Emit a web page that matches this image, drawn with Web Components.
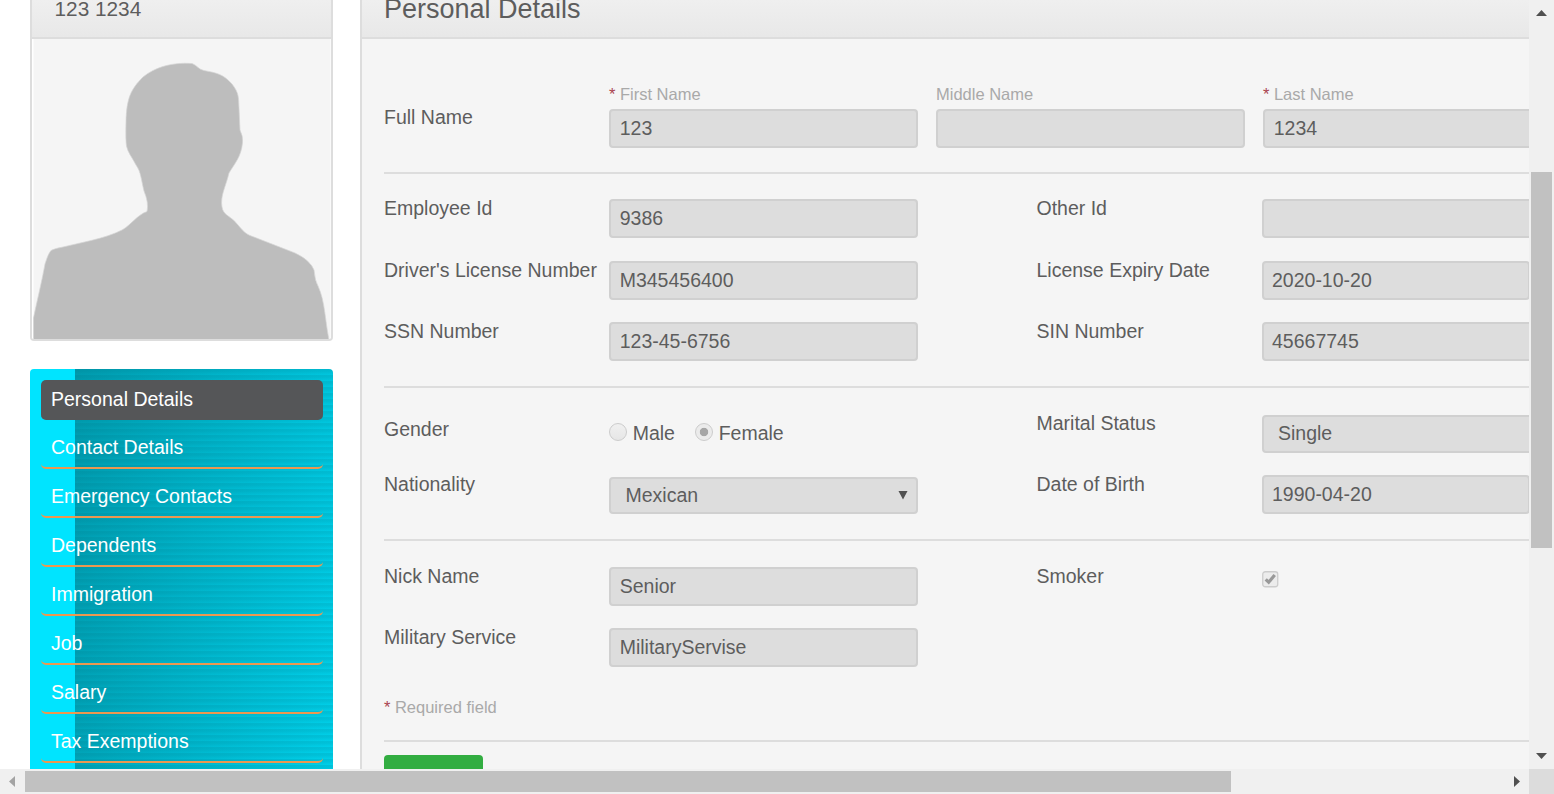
<!DOCTYPE html>
<html lang="en">
<head>
<meta charset="utf-8">
<title>Personal Details</title>
<style>
html,body{margin:0;height:100%;overflow:hidden;background:#fff}
body{font:19.5px/22px "Liberation Sans",Arial,sans-serif;color:#5d5d5d}
</style>
</head>
<body>
<hr-window>
  <hr-profile slot="side" name="123 1234"></hr-profile>
  <hr-menu slot="side">
    <hr-menu-item active>Personal Details</hr-menu-item>
    <hr-menu-item>Contact Details</hr-menu-item>
    <hr-menu-item>Emergency Contacts</hr-menu-item>
    <hr-menu-item>Dependents</hr-menu-item>
    <hr-menu-item>Immigration</hr-menu-item>
    <hr-menu-item>Job</hr-menu-item>
    <hr-menu-item>Salary</hr-menu-item>
    <hr-menu-item>Tax Exemptions</hr-menu-item>
    <hr-menu-item></hr-menu-item>
  </hr-menu>
  <hr-panel heading="Personal Details">
    <hr-name-row style="height:133px">
      <hr-input caption="First Name" required>123</hr-input>
      <hr-input caption="Middle Name"></hr-input>
      <hr-input caption="Last Name" required>1234</hr-input>
    </hr-name-row>
    <hr-section style="height:212px;--top:23px;--rows:62px 61px 61px">
      <hr-field label="Employee Id"><hr-input>9386</hr-input></hr-field>
      <hr-field label="Other Id"><hr-input></hr-input></hr-field>
      <hr-field label="Driver's License Number"><hr-input>M345456400</hr-input></hr-field>
      <hr-field label="License Expiry Date"><hr-input style="--w:268px;--pad:8.5px">2020-10-20</hr-input></hr-field>
      <hr-field label="SSN Number"><hr-input>123-45-6756</hr-input></hr-field>
      <hr-field label="SIN Number"><hr-input style="--pad:8.5px">45667745</hr-input></hr-field>
    </hr-section>
    <hr-section style="height:151px;--top:24px;--rows:61px 61px">
      <hr-field label="Gender" style="--drop:6px;--ctl:10px"><hr-radio>Male</hr-radio><hr-radio checked>Female</hr-radio></hr-field>
      <hr-field label="Marital Status" style="--ctl:3px"><hr-input style="--h:38px;--pad:14.5px">Single</hr-input></hr-field>
      <hr-field label="Nationality" style="--ctl:4px"><hr-input select style="--h:37px;--pad:14.5px">Mexican</hr-input></hr-field>
      <hr-field label="Date of Birth"><hr-input style="--w:268px;--pad:8.5px">1990-04-20</hr-input></hr-field>
    </hr-section>
    <hr-section style="height:199px;--top:24px;--rows:61px 61px">
      <hr-field label="Nick Name"><hr-input>Senior</hr-input></hr-field>
      <hr-field label="Smoker" style="--ctl:6px"><hr-check></hr-check></hr-field>
      <hr-field label="Military Service"><hr-input>MilitaryServise</hr-input></hr-field>
      <hr-note slot="foot"></hr-note>
    </hr-section>
    <hr-action></hr-action>
  </hr-panel>
</hr-window>
<script>
function define(name, markup, setup) {
  customElements.define(name, class extends HTMLElement {
    constructor() {
      super();
      this.attachShadow({ mode: 'open' }).innerHTML = markup;
    }
    connectedCallback() { if (setup) setup(this, this.shadowRoot); }
  });
}

define('hr-scrollbar', `<style>
:host{display:flex;background:#f0f0f0;overflow:hidden}
:host([axis=y]){flex-direction:column}
.arrow{flex:none;width:25px;height:25px;display:block}
.thumb{background:#c1c1c1;flex:none}
:host([axis=y]) .thumb{width:21px;height:376px;margin:147px 0 0 2px}
:host([axis=y]) .arrow:last-child,:host([axis=x]) .arrow:last-child{margin-top:auto}
:host([axis=x]) .thumb{height:21px;width:1206px;margin-top:2px}
:host([axis=x]) .arrow:last-child{margin:0 0 0 auto}
svg{fill:#505050}
:host([axis=x]) svg:first-of-type{fill:#a3a3a3}
</style><svg class="arrow" viewBox="0 0 25 25"><path/></svg><div class="thumb"></div><svg class="arrow" viewBox="0 0 25 25"><path/></svg>`,
(host, root) => {
  const p = root.querySelectorAll('path');
  const y = host.getAttribute('axis') === 'y';
  p[0].setAttribute('d', y ? 'M7 16 12.5 10 18 16Z' : 'M15 7 9 12.5 15 18Z');
  p[1].setAttribute('d', y ? 'M7 9 12.5 15 18 9Z' : 'M10 7 16 12.5 10 18Z');
});

define('hr-window', `<style>
:host{display:grid;width:1554px;height:794px;grid-template:769px 25px / 1529px 25px;overflow:hidden}
.page{display:grid;grid-template-columns:303px 1400px;column-gap:27px;padding-left:30px;overflow:hidden;align-items:start;height:769px;box-sizing:border-box}
.side{display:flex;flex-direction:column;gap:28px}
.corner{background:#dcdcdc}
</style>
<div class="page"><div class="side"><slot name="side"></slot></div><slot></slot></div>
<hr-scrollbar axis="y"></hr-scrollbar><hr-scrollbar axis="x"></hr-scrollbar><div class="corner"></div>`);

define('hr-profile', `<style>
:host{display:block;height:341px;box-sizing:border-box;border:solid #ddd;border-width:0 2px 2px;border-radius:0 0 4px 4px;overflow:hidden}
h2{margin:0;height:37px;border-bottom:2px solid #ddd;background:linear-gradient(#efefef,#e8e8e8);font-weight:400;font-size:20.8px;line-height:18px;padding-left:22.5px}
svg{display:block;width:299px;height:300px}
</style><h2></h2>
<svg viewBox="32 39 299 300"><rect x="32" y="39" width="299" height="300" fill="#fff"/><rect x="33.5" y="39" width="297" height="300" fill="#f5f5f5"/>
<path fill="#bdbdbd" stroke="#d5d5d5" stroke-width=".7" d="M33.5 340V318C37 301 42 281 45 264Q48 254 51 250.500Q54 248.500 63 247L91 240.500Q110 236 122 230C131 225 137 215 147 211.500Q149 203 144 191C141 179 141 172 136 165C132 157 128 153 126.500 146Q125.500 140 126 122C126.500 98 131 89 143 77C155 67 173 62 192 63.500C198 66 198 69 204 70.500C217 73 223 74 232 84C239 93 238.500 97 239 108L240 130Q243.500 137 242.500 143C241 157 235 163 229 173C226 186 220 196 222 207C223 214 229 216 234 220.500C241 228 244 233 250 235.500L295 253Q310 260 314 270Q315 281 318 286C325 301 325 320 329 340Z"/></svg>`,
(host, root) => { root.querySelector('h2').textContent = host.getAttribute('name'); });

define('hr-menu', `<style>
:host{display:flex;flex-direction:column;gap:9px;box-sizing:border-box;width:303px;height:480px;padding:11px 10px 0 11px;border-radius:4px;overflow:hidden;
background:linear-gradient(90deg,#00e4ff 45px,transparent 45px),repeating-linear-gradient(#006c7a26 0 2px,#006c7a12 4px,#006c7a00 6px),linear-gradient(98deg,#009bae 45px,#00b4ca 50%,#00d2ec)}
</style><slot></slot>`);

define('hr-menu-item', `<style>
:host{display:block;flex:none;box-sizing:border-box;height:40px;border-bottom:2px solid #ec9850;border-radius:5px;padding:7px 10px;color:#fff}
:host([active]){background:#555658;border-color:#555658;padding-top:8px}
</style><slot></slot>`);

define('hr-panel', `<style>
:host{display:block;box-sizing:border-box;width:1400px;height:900px;border-left:2px solid #ddd;background:#f5f5f5}
h1{margin:0;height:37px;border-bottom:2px solid #ddd;background:linear-gradient(#efefef,#e8e8e8);font-weight:400;font-size:27px;line-height:18px;padding-left:22px}
.body{padding-left:22px}
</style><h1></h1><div class="body"><slot></slot></div>`,
(host, root) => { root.querySelector('h1').textContent = host.getAttribute('heading'); });

define('hr-name-row', `<style>
:host{display:grid;grid-template-columns:225px max-content;border-bottom:2px solid #ddd}
.label{padding-top:67px}
.names{display:flex;gap:18px;padding-top:44px}
</style><div class="label">Full Name</div><div class="names"><slot></slot></div>`);

define('hr-section', `<style>
:host{display:block;border-bottom:2px solid #ddd}
.grid{display:grid;box-sizing:border-box;grid-template-columns:652.5px 652.5px;grid-template-rows:var(--rows);padding-top:var(--top)}
</style><div class="grid"><slot></slot></div><slot name="foot"></slot>`);

define('hr-field', `<style>
:host{display:grid;grid-template-columns:225px 1fr;align-items:start}
.label{padding-top:var(--drop,0);white-space:nowrap}
.control{display:flex;gap:20px;padding-top:var(--ctl,2px)}
</style><div class="label"></div><div class="control"><slot></slot></div>`,
(host, root) => { root.querySelector('.label').textContent = host.getAttribute('label'); });

define('hr-input', `<style>
:host{display:block;width:var(--w,309px)}
.caption{display:none;box-sizing:border-box;padding-top:1px;font-size:16.5px;line-height:20px;height:26px;color:#a9a9a9}
:host([caption]) .caption{display:block}
.star{display:none;color:#aa4450;margin-right:4.5px}
:host([required]) .star{display:inline}
.box{display:flex;justify-content:space-between;align-items:center;box-sizing:border-box;height:var(--h,39px);border:2px solid #d0d0d0;border-radius:4px;background:#ddd;padding:0 8px 2px var(--pad,8.7px)}
svg{display:none;width:10px;height:10px;fill:#505050}
:host([select]) svg{display:block}
</style><div class="caption"><span class="star">*</span><span class="text"></span></div>
<div class="box"><span><slot></slot></span><svg viewBox="0 0 10 10"><path d="M.5 1H9.500L5 9.500Z"/></svg></div>`,
(host, root) => { root.querySelector('.text').textContent = host.getAttribute('caption') || ''; });

define('hr-radio', `<style>
:host{display:flex;gap:5.700px}
i{box-sizing:border-box;width:18px;height:18px;margin-top:1px;border:1px solid #ccc;border-radius:50%;background:linear-gradient(#f0f0f0,#e6e6e6)}
:host([checked]) i{background:radial-gradient(circle,#a6a6a6 3.8px,#ebebeb 4.600px)}
</style><i></i><span><slot></slot></span>`);

define('hr-check', `<style>:host{display:block}svg{display:block}</style>
<svg width="17" height="17" viewBox="0 0 17 17"><rect x=".75" y=".75" width="15" height="15" rx="2.500" fill="#ececec" stroke="#ccc" stroke-width="1.300"/><path d="M3.700 8.300 6.700 11.200 12.700 4" fill="none" stroke="#999" stroke-width="3.200"/></svg>`);

define('hr-note', `<style>
:host{display:block;font-size:16.5px;line-height:20px;color:#a9a9a9;padding-top:10px}
span{color:#aa4450;margin-right:4.5px}
</style><span>*</span>Required field`);

define('hr-action', `<style>
:host{display:block;width:99px;height:45px;margin-top:13px;border-radius:4px;background:#32ad41}
</style>`);
</script>
</body>
</html>
